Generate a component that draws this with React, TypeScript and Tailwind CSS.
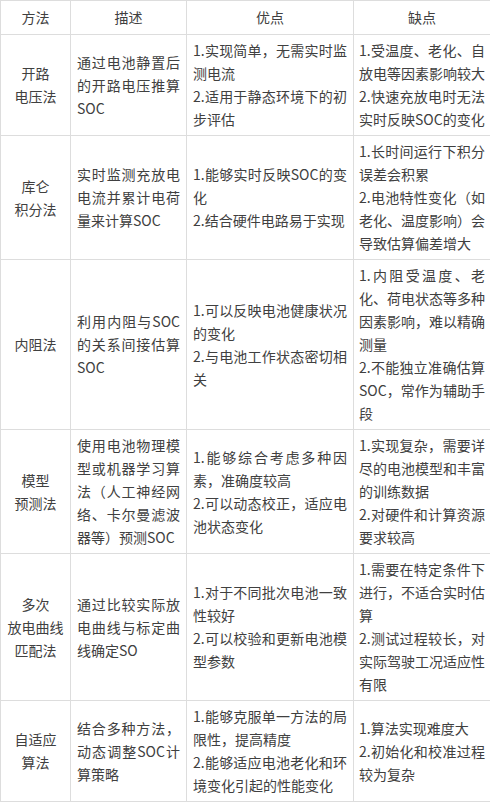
type Paras = string[][];

type Row = {
    method: string[];
    desc: Paras;
    pros: Paras;
    cons: Paras;
};

const headers = ["方法", "描述", "优点", "缺点"];

// each cell = paragraphs, each paragraph = its wrapped lines
const rows: Row[] = [
    {
        method: ["开路", "电压法"],
        desc: [["通过电池静置后", "的开路电压推算", "SOC"]],
        pros: [
            ["1.实现简单，无需实时监", "测电流"],
            ["2.适用于静态环境下的初", "步评估"],
        ],
        cons: [
            ["1.受温度、老化、自", "放电等因素影响较大"],
            ["2.快速充放电时无法", "实时反映SOC的变化"],
        ],
    },
    {
        method: ["库仑", "积分法"],
        desc: [["实时监测充放电", "电流并累计电荷", "量来计算SOC"]],
        pros: [["1.能够实时反映SOC的变", "化"], ["2.结合硬件电路易于实现"]],
        cons: [
            ["1.长时间运行下积分", "误差会积累"],
            ["2.电池特性变化（如", "老化、温度影响）会", "导致估算偏差增大"],
        ],
    },
    {
        method: ["内阻法"],
        desc: [["利用内阻与SOC", "的关系间接估算", "SOC"]],
        pros: [
            ["1.可以反映电池健康状况", "的变化"],
            ["2.与电池工作状态密切相", "关"],
        ],
        cons: [
            ["1.内阻受温度、老", "化、荷电状态等多种", "因素影响，难以精确", "测量"],
            ["2.不能独立准确估算", "SOC，常作为辅助手", "段"],
        ],
    },
    {
        method: ["模型", "预测法"],
        desc: [["使用电池物理模", "型或机器学习算", "法（人工神经网", "络、卡尔曼滤波", "器等）预测SOC"]],
        pros: [
            ["1.能够综合考虑多种因", "素，准确度较高"],
            ["2.可以动态校正，适应电", "池状态变化"],
        ],
        cons: [
            ["1.实现复杂，需要详", "尽的电池模型和丰富", "的训练数据"],
            ["2.对硬件和计算资源", "要求较高"],
        ],
    },
    {
        method: ["多次", "放电曲线", "匹配法"],
        desc: [["通过比较实际放", "电曲线与标定曲", "线确定SO"]],
        pros: [
            ["1.对于不同批次电池一致", "性较好"],
            ["2.可以校验和更新电池模", "型参数"],
        ],
        cons: [
            ["1.需要在特定条件下", "进行，不适合实时估", "算"],
            ["2.测试过程较长，对", "实际驾驶工况适应性", "有限"],
        ],
    },
    {
        method: ["自适应", "算法"],
        desc: [["结合多种方法，", "动态调整SOC计", "算策略"]],
        pros: [
            ["1.能够克服单一方法的局", "限性，提高精度"],
            ["2.能够适应电池老化和环", "境变化引起的性能变化"],
        ],
        cons: [["1.算法实现难度大"], ["2.初始化和校准过程", "较为复杂"]],
    },
];

function Lines({ paras }: { paras: Paras }) {
    return (
        <>
            {paras.map((lines, i) =>
                lines.map((line, j) => (
                    <div
                        key={`${i}-${j}`}
                        className={
                            j < lines.length - 1
                                ? "whitespace-nowrap text-justify [text-align-last:justify]"
                                : "whitespace-nowrap"
                        }
                    >
                        {line}
                    </div>
                ))
            )}
        </>
    );
}

export default function App() {
    return (
        <div className="w-[490px] bg-white font-['Noto_Sans_CJK_SC','Noto_Sans',sans-serif] text-[14px] leading-[23px] text-[#404040]">
            <table className="w-[490px] table-fixed border-collapse">
                <colgroup>
                    <col className="w-[70px]" />
                    <col className="w-[116px]" />
                    <col className="w-[167px]" />
                    <col className="w-[137px]" />
                </colgroup>
                <thead>
                    <tr>
                        {headers.map((h) => (
                            <th key={h} className="border border-[#dddddd] py-[5px] text-center font-normal">
                                {h}
                            </th>
                        ))}
                    </tr>
                </thead>
                <tbody>
                    {rows.map((row) => (
                        <tr key={row.method.join("")}>
                            <td className="border border-[#dddddd] px-[4px] py-[4px] text-center align-middle">
                                {row.method.map((m) => (
                                    <div key={m}>{m}</div>
                                ))}
                            </td>
                            <td className="border border-[#dddddd] px-[6px] py-[4px] align-middle">
                                <Lines paras={row.desc} />
                            </td>
                            <td className="border border-[#dddddd] px-[6px] py-[4px] align-middle">
                                <Lines paras={row.pros} />
                            </td>
                            <td className="border border-[#dddddd] px-[5px] py-[4px] align-middle">
                                <Lines paras={row.cons} />
                            </td>
                        </tr>
                    ))}
                </tbody>
            </table>
        </div>
    );
}
